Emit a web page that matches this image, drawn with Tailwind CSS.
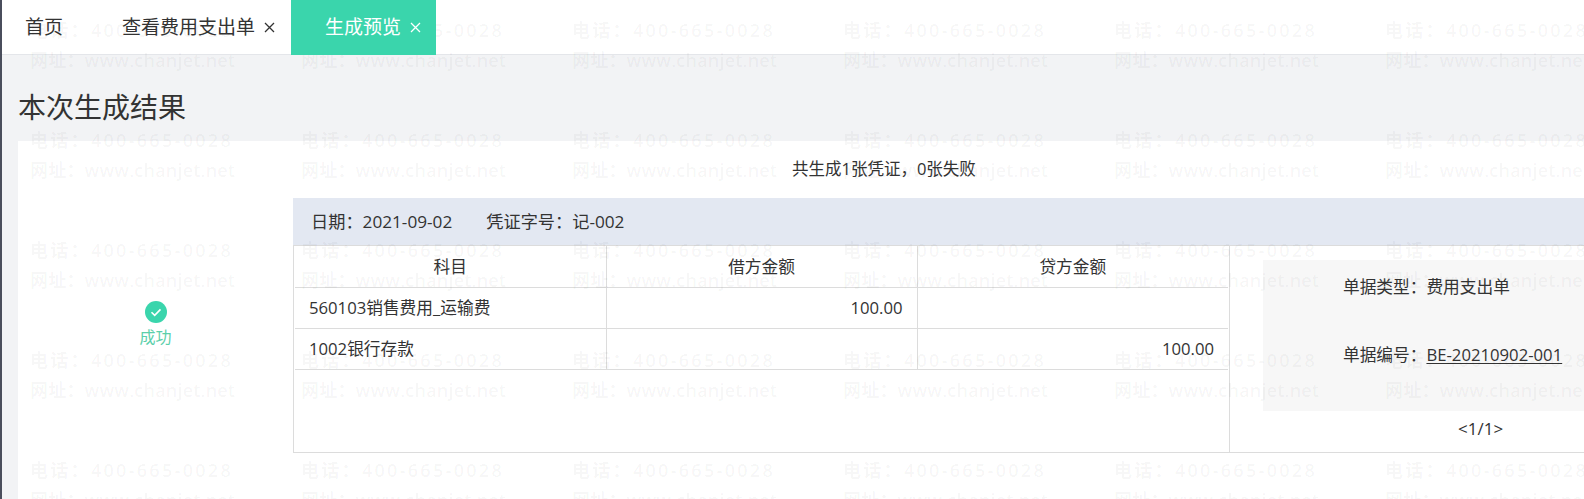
<!DOCTYPE html>
<html lang="zh-CN">
<head>
  <meta charset="UTF-8">
  <meta name="viewport" content="width=device-width, initial-scale=1.0">
  <title>生成预览</title>
  <script src="https://cdn.jsdelivr.net/npm/@tailwindcss/browser@4"></script>
</head>
<body class="overflow-hidden">
<div class="relative flex h-[499px] w-[1584px] flex-col overflow-hidden border-l-2 border-[#4a4e5c] bg-[#f2f3f5] font-['Open_Sans','Noto_Sans_CJK_SC',sans-serif] text-[#333]">

  <!-- tabs -->
  <div class="flex h-[55px] shrink-0 border-b border-[#e4e6ea] bg-white text-[19px]">
    <div class="flex w-[98px] items-center pl-[23px]">首页</div>
    <div class="flex w-[191px] items-center gap-[9px] pl-[22px]">
      <span>查看费用支出单</span>
      <svg class="h-[11px] w-[11px]" viewBox="0 0 11 11" fill="none" stroke="#333" stroke-width="1.3"><path d="M1 1l9 9M10 1l-9 9"/></svg>
    </div>
    <div class="relative z-20 -mb-px flex w-[145px] items-center gap-[9px] bg-[#3ad5ac] pl-[34px] text-white">
      <span>生成预览</span>
      <svg class="h-[11px] w-[11px]" viewBox="0 0 11 11" fill="none" stroke="#fff" stroke-width="1.3"><path d="M1 1l9 9M10 1l-9 9"/></svg>
    </div>
  </div>

  <h1 class="flex h-[86px] shrink-0 items-center pt-[18px] pl-[16px] text-[28px] leading-none font-normal">本次生成结果</h1>

  <!-- result panel -->
  <div class="ml-[16px] flex-1 bg-white text-[16.7px]">
    <div class="flex h-[57px] items-center pl-[774px] text-[16.5px]">共生成1张凭证，0张失败</div>

    <div class="flex">
      <div class="flex h-[254px] w-[275px] shrink-0 flex-col items-center justify-center">
        <svg class="h-[22px] w-[22px]" viewBox="0 0 22 22"><circle cx="11" cy="11" r="11" fill="#3ad5ac"/><path d="M6.5 11.2l3.2 3.2 5.8-6" fill="none" stroke="#fff" stroke-width="1.6"/></svg>
        <div class="mt-[2px] text-[16px] text-[#5ccfaa]">成功</div>
      </div>

      <div class="flex-1">
        <div class="flex h-[48px] items-center gap-[34px] border-b border-[#dcdcdc] bg-[#e3e8f2] pl-[18px] text-[17.2px]">
          <span>日期：2021-09-02</span>
          <span>凭证字号：记-002</span>
        </div>
        <div class="flex h-[207px] border-b border-l border-[#dcdcdc]">
          <div class="h-full w-[936px] shrink-0 border-r border-[#dcdcdc] pl-px">
            <table class="w-[933px] table-fixed border-collapse">
              <thead>
                <tr class="h-[41px] border-b border-[#dcdcdc]">
                  <th class="w-[311px] border-r border-[#dcdcdc] font-normal">科目</th>
                  <th class="w-[311px] border-r border-[#dcdcdc] font-normal">借方金额</th>
                  <th class="w-[311px] font-normal">贷方金额</th>
                </tr>
              </thead>
              <tbody>
                <tr class="h-[41px] border-b border-[#dcdcdc]">
                  <td class="border-r border-[#dcdcdc] pl-[14px]">560103销售费用_运输费</td>
                  <td class="border-r border-[#dcdcdc] pr-[14px] text-right">100.00</td>
                  <td class="pr-[14px] text-right"></td>
                </tr>
                <tr class="h-[41px] border-b border-[#dcdcdc]">
                  <td class="border-r border-[#dcdcdc] pl-[14px]">1002银行存款</td>
                  <td class="border-r border-[#dcdcdc] pr-[14px] text-right"></td>
                  <td class="pr-[14px] text-right">100.00</td>
                </tr>
              </tbody>
            </table>
          </div>
          <div class="flex-1 pl-[33px] pt-[14px]">
            <div class="flex h-[151px] flex-col bg-[#f7f7f7] pl-[80px]">
              <div class="flex h-[39px] items-end">单据类型：费用支出单</div>
              <div class="mt-[43px] whitespace-nowrap">单据编号：<span class="underline underline-offset-2">BE-20210902-001</span></div>
            </div>
            <div class="flex h-[36px] items-center pl-[195px] text-[17px]">&lt;1/1&gt;</div>
          </div>
        </div>
      </div>
    </div>
  </div>

  <!-- watermark -->
  <div id="watermark" class="pointer-events-none absolute left-[28px] top-[15px] z-10 grid w-[1626px] grid-cols-6 gap-y-[50px] text-[18px] leading-[30px] font-semibold text-black/[0.045]"></div>
</div>

<script>
  const box = document.getElementById("watermark");
  for (let i = 0; i < 30; i++) {
    const item = document.createElement("div");
    item.className = "h-[60px] whitespace-nowrap";
    item.innerHTML = '<div class="tracking-[2.3px]">电话：400-665-0028</div><div class="tracking-[0.2px]">网址：www.chanjet.net</div>';
    box.appendChild(item);
  }
</script>
</body>
</html>
